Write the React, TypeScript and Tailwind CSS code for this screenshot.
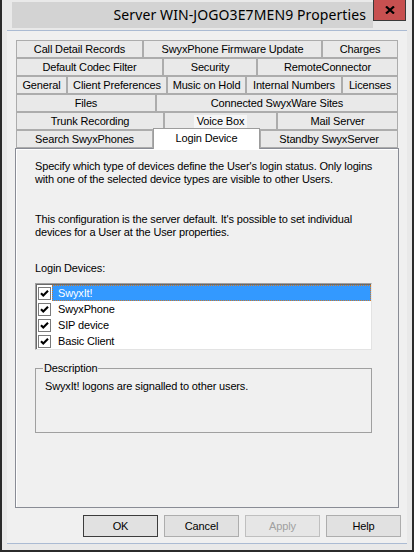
import React from 'react';

type Tab = { label: string; w: string; active?: boolean; hot?: boolean };

// Property sheet tab rows, back row first.
const tabRows: Tab[][] = [
  [
    { label: 'Call Detail Records', w: 'w-[127px]' },
    { label: 'SwyxPhone Firmware Update', w: 'w-[179px]' },
    { label: 'Charges', w: 'w-[76px]' },
  ],
  [
    { label: 'Default Codec Filter', w: 'w-[147px]' },
    { label: 'Security', w: 'w-[94px]' },
    { label: 'RemoteConnector', w: 'w-[141px]' },
  ],
  [
    { label: 'General', w: 'w-[51px]' },
    { label: 'Client Preferences', w: 'w-[100px]' },
    { label: 'Music on Hold', w: 'w-[79px]' },
    { label: 'Internal Numbers', w: 'w-[96px]' },
    { label: 'Licenses', w: 'w-[56px]' },
  ],
  [
    { label: 'Files', w: 'w-[140px]' },
    { label: 'Connected SwyxWare Sites', w: 'w-[242px]' },
  ],
  [
    { label: 'Trunk Recording', w: 'w-[148px]' },
    { label: 'Voice Box', w: 'w-[113px]', hot: true },
    { label: 'Mail Server', w: 'w-[121px]' },
  ],
  [
    { label: 'Search SwyxPhones', w: 'w-[137px]' },
    { label: 'Login Device', w: 'w-[107px]', active: true },
    { label: 'Standby SwyxServer', w: 'w-[138px]' },
  ],
];

const devices = ['SwyxIt!', 'SwyxPhone', 'SIP device', 'Basic Client'];

const ui = "font-['Liberation_Sans',Arial,sans-serif] text-[11px] tracking-[-0.15px] leading-[13px] text-black";

function CloseGlyph() {
  return (
    <svg width="10" height="8" viewBox="0 0 10 8">
      <path d="M1 0.5 L9 7.5 M9 0.5 L1 7.5" stroke="#000" strokeWidth="2.2" />
    </svg>
  );
}

function CheckBox() {
  return (
    <div className="w-[13px] h-[13px] border border-[#7a7a7a] bg-white flex items-center justify-center shrink-0">
      <svg width="9" height="9" viewBox="0 0 9 9">
        <path d="M1 4.2 L3.3 6.6 L8 1.8" stroke="#000" strokeWidth="2.1" fill="none" />
      </svg>
    </div>
  );
}

function TabButton({ tab }: { tab: Tab }) {
  if (tab.active) {
    return (
      <div
        className={`${tab.w} relative z-10 -mt-[2px] -mb-[1px] h-[21px] border border-b-0 border-[#9c9c9c] bg-white flex items-center justify-center pb-[1px]`}
      >
        {tab.label}
      </div>
    );
  }
  return (
    <div className={`${tab.w} h-[18px] border border-[#acacac] bg-[#e9e9e9] flex items-center justify-center`}>
      <span className={tab.hot ? 'bg-[#f6f6f6] px-[3px]' : ''}>{tab.label}</span>
    </div>
  );
}

function DialogButton({ label, primary, disabled }: { label: string; primary?: boolean; disabled?: boolean }) {
  const border = primary ? 'border-[#3c3c3c]' : disabled ? 'border-[#bfbfbf]' : 'border-[#adadad]';
  return (
    <div
      className={`w-[75px] h-[22px] border ${border} ${disabled ? 'bg-[#e6e6e6] text-[#a0a0a0]' : 'bg-[#e1e1e1]'} flex items-center justify-center`}
    >
      {label}
    </div>
  );
}

export default function App() {
  return (
    <div className={`w-[414px] h-[552px] bg-[#e9e9e9] border-x-2 border-b-2 border-[#2b2b2b] flex flex-col ${ui}`}>
      {/* caption */}
      <div className="h-[30px] flex shrink-0">
        <div className="pl-[10px] pt-[2px]">
          <div className="w-[361px] h-[26px] bg-[#d3d3d3] flex items-center justify-end pr-[7px]">
            <span className="font-['Noto_Sans',sans-serif] text-[14px] tracking-[0.1px] leading-none text-black">
              Server WIN-JOGO3E7MEN9 Properties
            </span>
          </div>
        </div>
        <div className="w-[33px] h-[21px] bg-[#c75050] border-x border-b border-[#3a3a3a] flex items-center justify-center">
          <CloseGlyph />
        </div>
      </div>

      {/* client area */}
      <div className="ml-[5px] mr-[5px] h-[514px] border-y border-[#abbbd3] bg-[#f0f0f0] flex flex-col pt-[9px]">
        <div className="ml-[9px] flex flex-col">
          {tabRows.map((row, i) => (
            <div key={i} className="flex items-start">
              {row.map((tab) => (
                <TabButton key={tab.label} tab={tab} />
              ))}
            </div>
          ))}
        </div>

        <div className="ml-[8px] w-[384px] h-[360px] border border-[#898c95] bg-[#f0f0f0] shadow-[inset_1px_1px_0_#ffffff] pl-[19px] pt-[11px] flex flex-col">
          <p>
            Specify which type of devices define the User's login status. Only logins
            <br />
            with one of the selected device types are visible to other Users.
          </p>
          <p className="mt-[27px]">
            This configuration is the server default. It's possible to set individual
            <br />
            devices for a User at the User properties.
          </p>
          <p className="mt-[23px]">Login Devices:</p>

          <div className="mt-[8px] w-[337px] h-[67px] border border-t-[#a0a0a0] border-l-[#a0a0a0] border-r-[#e3e3e3] border-b-[#e3e3e3] shadow-[inset_1px_1px_0_#696969] bg-white pt-[1px] pl-[1px]">
            {devices.map((d, i) => (
              <div key={d} className="h-[16px] flex items-center">
                <div className="ml-[1px] mr-[1px]">
                  <CheckBox />
                </div>
                {i === 0 ? (
                  <div className="flex-1 h-[16px] bg-[#3399ff] text-white outline-1 outline-dotted outline-[#cc7a2c] -outline-offset-1 flex items-center pl-[6px]">
                    {d}
                  </div>
                ) : (
                  <div className="flex-1 h-[16px] flex items-center pl-[6px]">{d}</div>
                )}
              </div>
            ))}
          </div>

          <fieldset className="mt-[12px] w-[337px] h-[71px] border border-[#a0a0a0] pl-[9px]">
            <legend className="-ml-[2px] px-[1px]">Description</legend>
            <p className="mt-[5px]">SwyxIt! logons are signalled to other users.</p>
          </fieldset>
        </div>

        <div className="mt-[7px] flex justify-end gap-[6px] pr-[6px]">
          <DialogButton label="OK" primary />
          <DialogButton label="Cancel" />
          <DialogButton label="Apply" disabled />
          <DialogButton label="Help" />
        </div>
      </div>
    </div>
  );
}
